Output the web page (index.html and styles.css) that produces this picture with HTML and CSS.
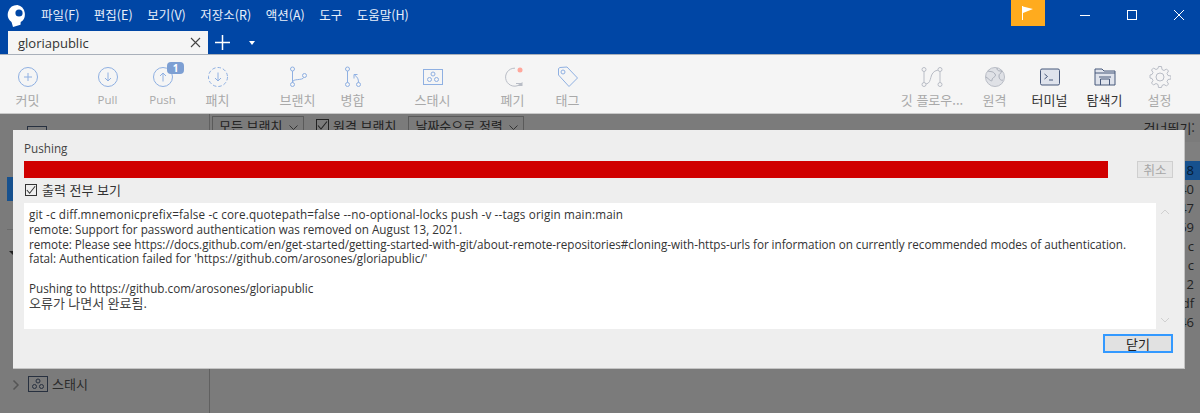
FILE: index.html
```html
<!DOCTYPE html>
<html lang="ko">
<head>
<meta charset="utf-8">
<title>gloriapublic</title>
<link rel="stylesheet" href="styles.css">
</head>
<body>
<div class="app">
  <header class="titlebar">
    <div class="menu-row">
      <svg class="logo" width="22" height="24" viewBox="0 0 22 24"><path d="M10.500 1a9.500 9.500 0 0 0-6 17l1.500 5 7.500-2.200.2-2.700A9.500 9.500 0 0 0 10.500 1z" fill="#fff"/><circle cx="12" cy="9" r="3.600" fill="#0046a5"/></svg>
      <nav class="menu">
        <span>파일(F)</span><span>편집(E)</span><span>보기(V)</span><span>저장소(R)</span><span>액션(A)</span><span>도구</span><span>도움말(H)</span>
      </nav>
      <div class="flag"><svg width="14" height="16" viewBox="0 0 14 16"><path d="M1.500 1v14" stroke="#fff" fill="none"/><path d="M2 1.500 12 4 2 8z" fill="#fff"/></svg></div>
      <div class="winbtns">
        <svg width="12" height="12" viewBox="0 0 12 12"><path d="M1 6.500h10" stroke="#fff" fill="none"/></svg>
        <svg width="12" height="12" viewBox="0 0 12 12"><rect x="1.500" y="1.500" width="9" height="9" stroke="#fff" fill="none"/></svg>
        <svg width="12" height="12" viewBox="0 0 12 12"><path d="M1 1l10 10M11 1 1 11" stroke="#fff" fill="none"/></svg>
      </div>
    </div>
    <div class="tab-row">
      <div class="tab"><span>gloriapublic</span><svg width="11" height="11" viewBox="0 0 11 11"><path d="M1 1l9 9M10 1 1 10" stroke="#444" stroke-width="1.100" fill="none"/></svg></div>
      <svg class="plus" width="15" height="15" viewBox="0 0 15 15"><path d="M7.500 0v15M0 7.500h15" stroke="#fff" stroke-width="1.500" fill="none"/></svg>
      <span class="caret"></span>
    </div>
  </header>

  <section class="toolbar">
    <div class="tool"><svg viewBox="0 0 22 22"><circle cx="11" cy="11" r="9.500" fill="none" stroke="#8fb0e2"/><path d="M11 7v8M7 11h8" stroke="#8fb0e2" fill="none"/></svg><span>커밋</span></div>
    <div class="tool gap"><svg viewBox="0 0 22 22"><circle cx="11" cy="11" r="9.500" fill="none" stroke="#8fb0e2"/><path d="M11 6.500v8.500M8 12l3 3 3-3" stroke="#8fb0e2" fill="none"/></svg><span class="latin">Pull</span></div>
    <div class="tool"><svg viewBox="0 0 22 22"><circle cx="11" cy="11" r="9.500" fill="none" stroke="#8fb0e2"/><path d="M11 15.500V7M8 10l3-3 3 3" stroke="#8fb0e2" fill="none"/></svg><span class="latin">Push</span><b class="badge">1</b></div>
    <div class="tool"><svg viewBox="0 0 22 22"><circle cx="11" cy="11" r="9.500" fill="none" stroke="#8fb0e2" stroke-dasharray="3.500 2"/><path d="M11 6.500v8.500M8 12l3 3 3-3" stroke="#8fb0e2" fill="none"/></svg><span>패치</span></div>
    <div class="tool gap"><svg viewBox="0 0 22 22"><g fill="none" stroke="#8fb0e2"><circle cx="5.500" cy="3" r="2"/><circle cx="5.500" cy="18.500" r="2"/><circle cx="17.500" cy="9.500" r="2"/><path d="M5.500 5v11.500M5.500 16.500c0-4.500 10-1.500 11.500-5.200"/></g></svg><span>브랜치</span></div>
    <div class="tool"><svg viewBox="0 0 22 22"><g fill="none" stroke="#8fb0e2"><circle cx="5.500" cy="3" r="2"/><circle cx="5.500" cy="18.500" r="2"/><circle cx="16.500" cy="18.500" r="2"/><path d="M5.500 5v11.500M16.500 16.500c0-3.500-1-5.500-4-7.500M12 12.500V8.500h3.500"/></g></svg><span>병합</span></div>
    <div class="tool gap"><svg viewBox="0 0 22 22"><g fill="none" stroke="#8fb0e2"><rect x="1.500" y="3.500" width="19" height="15"/><circle cx="11" cy="8" r="2"/><circle cx="7.500" cy="13.500" r="2"/><circle cx="14.500" cy="13.500" r="2"/></g></svg><span>스태시</span></div>
    <div class="tool gap"><svg viewBox="0 0 22 22"><path d="M13 2.200A9 9 0 1 0 19 17.500M19 17.500h-5" fill="none" stroke="#b9bdc6"/><path d="M15 20l5.500-4v4z" fill="#b9bdc6"/><circle cx="18" cy="4" r="2.500" fill="#ffa79c"/></svg><span>폐기</span></div>
    <div class="tool"><svg viewBox="0 0 22 22"><g fill="none" stroke="#8fb0e2"><path d="M1.500 2.500l1.500-1 7-.5L20.500 12 12 20.500 1.500 9z"/><circle cx="6" cy="6" r="2"/></g></svg><span>태그</span></div>
    <div class="tool flow"><svg viewBox="0 0 22 22"><g fill="none" stroke="#b9bdc6"><circle cx="3" cy="3.500" r="2"/><circle cx="3" cy="18.500" r="2"/><circle cx="19" cy="3.500" r="2"/><circle cx="19" cy="18.500" r="2"/><path d="M3 5.500v11M19 5.500v11M5 18c7-1 2-12 12-14"/></g></svg><span>깃 플로우...</span></div>
    <div class="tool"><svg viewBox="0 0 22 22"><circle cx="11" cy="11" r="9.500" fill="#dfe1e6" stroke="#b9bdc6"/><path d="M4 5c3 1 5 0 7 3s-3 3-3 6-4-2-6-3M13 2c0 3 2 3 5 3-1 3-3 2-3 5s2 5 4 4" fill="none" stroke="#a9aeb9"/></svg><span>원격</span></div>
    <div class="tool dark"><svg viewBox="0 0 22 22"><rect x="1.500" y="3" width="19" height="16" rx="1.500" fill="#dfe3ec" stroke="#47587a"/><path d="M5.500 8l3 2.500-3 2.500M10 14h4" fill="none" stroke="#47587a"/></svg><span>터미널</span></div>
    <div class="tool dark"><svg viewBox="0 0 22 22"><path d="M1 19V3h7l2 2h11v14z" fill="#dfe3ec" stroke="#47587a"/><path d="M1 7h20M6.500 19v-6h9v6M5 11h12" fill="none" stroke="#47587a"/></svg><span>탐색기</span></div>
    <div class="tool"><svg viewBox="0 0 22 22"><g fill="none" stroke="#b9bdc6"><circle cx="11" cy="11" r="4"/><path d="M9.500 1h3l.5 3 2 1 2.500-1.500 2 2L18 8l1 2 3 .5v3l-3 .5-1 2 1.500 2.500-2 2L15 19l-2 1-.5 2h-3L9 19l-2-1-2.500 1.500-2-2L4 15l-1-2-2-.5v-3L3 9l1-2-1.500-2.500 2-2L7 4l2-1z" transform="translate(0 -.5)"/></g></svg><span>설정</span></div>
  </section>

  <main class="backdrop">
    <aside class="side">
      <div class="side-top"><span class="side-box"></span></div>
      <div class="side-sel"></div>
      <div class="side-rule"></div>
      <svg class="side-arrow" width="6" height="6" viewBox="0 0 6 6"><path d="M0 0h6v6z" fill="#222"/></svg>
      <div class="side-fill"></div>
      <div class="side-stash">
        <svg class="side-chev" width="8" height="12" viewBox="0 0 8 12"><path d="M1.500 1.500 6 6l-4.500 4.500" fill="none" stroke="#555" stroke-width="1.500"/></svg>
        <svg width="20" height="16" viewBox="0 0 20 16"><g fill="none" stroke="#27303f"><rect x=".5" y=".5" width="19" height="15"/><circle cx="10" cy="5" r="2"/><circle cx="6.500" cy="10.500" r="2"/><circle cx="13.500" cy="10.500" r="2"/></g></svg>
        <span>스태시</span>
      </div>
    </aside>
    <div class="content">
      <div class="filter">
        <span class="select sel-a">모든 브랜치<svg width="9" height="5" viewBox="0 0 9 5"><path d="M.5.500l4 4 4-4" fill="none" stroke="#333"/></svg></span>
        <span class="check-bg"><svg width="13" height="13" viewBox="0 0 13 13"><path d="M2 6.500 5 10l6-7.500" fill="none" stroke="#222" stroke-width="1.100"/></svg></span><span class="lbl">원격 브랜치</span>
        <span class="select sel-b">날짜순으로 정렬<svg width="9" height="5" viewBox="0 0 9 5"><path d="M.5.500l4 4 4-4" fill="none" stroke="#333"/></svg></span>
        <span class="skip">건너뛰기:</span>
      </div>
      <div class="rows">
        <div class="row head"></div>
        <div class="row on">8</div>
        <div class="row">40</div>
        <div class="row">47</div>
        <div class="row">69</div>
        <div class="row">c</div>
        <div class="row">c</div>
        <div class="row">2</div>
        <div class="row">df</div>
        <div class="row">46</div>
      </div>
    </div>
  </main>

  <div class="modal">
    <div class="m-title">Pushing</div>
    <div class="m-progress">
      <div class="bar"></div>
      <button class="cancel">취소</button>
    </div>
    <label class="m-check"><span class="box"><svg width="12" height="12" viewBox="0 0 13 13"><path d="M2 6.500 5 10l6-7.500" fill="none" stroke="#333" stroke-width="1.100"/></svg></span>출력 전부 보기</label>
    <div class="m-log">
      <pre class="log"><span class="wide">git -c diff.mnemonicprefix=false -c core.quotepath=false --no-optional-locks push -v --tags origin main:main</span>
remote: Support for password authentication was removed on August 13, 2021.
<span class="tight">remote: Please see https://docs.github.com/en/get-started/getting-started-with-git/about-remote-repositories#cloning-with-https-urls for information on currently recommended modes of authentication.</span>
fatal: Authentication failed for 'https://github.com/arosones/gloriapublic/'

Pushing to https://github.com/arosones/gloriapublic
<span class="ko">오류가 나면서 완료됨.</span></pre>
      <div class="scroll">
        <svg width="10" height="6" viewBox="0 0 10 6"><path d="M1 5l4-4 4 4" fill="none" stroke="#d0d0d0"/></svg>
        <svg width="10" height="6" viewBox="0 0 10 6"><path d="M1 1l4 4 4-4" fill="none" stroke="#d0d0d0"/></svg>
      </div>
    </div>
    <div class="m-foot"><button class="close">닫기</button></div>
  </div>
</div>
</body>
</html>
```

FILE: styles.css
```css
* { box-sizing: border-box; }
html, body { margin: 0; padding: 0; }
body {
  width: 1200px; height: 413px; overflow: hidden;
  font-family: "Open Sans", "Noto Sans CJK KR", sans-serif;
  font-size: 12px; color: #222;
}
.app { position: relative; width: 1200px; height: 413px; display: flex; flex-direction: column; background: #7b7b7b; }

.titlebar { height: 55px; background: #0046a5; border-bottom: 1px solid #a9b0ba; display: flex; flex-direction: column; flex: none; }
.menu-row { height: 31px; display: flex; align-items: flex-start; color: #fff; }
.logo { margin: 4px 0 0 7px; flex: none; }
.menu { display: flex; gap: 14.500px; margin: 6px 0 0 12px; font-size: 12.500px; line-height: 17px; color: #e8effa; font-family: "Noto Sans CJK KR", sans-serif; }
.flag { width: 34px; height: 26px; margin-left: auto; background: #ffab1e; display: flex; align-items: center; justify-content: center; }
.winbtns { width: 155px; display: flex; justify-content: space-between; padding: 9px 15px 0 34px; }
.tab-row { display: flex; align-items: center; height: 23px; }
.tab { width: 200px; height: 23px; margin-left: 8px; background: #f5f5f5; color: #333; display: flex; align-items: center; justify-content: space-between; padding: 0 7px 0 10px; font-size: 13px; }
.plus { margin-left: 7px; }
.caret { margin-left: 19px; border: 3.500px solid transparent; border-top: 4px solid #fff; border-bottom: 0; }

.toolbar { height: 59px; background: #f5f5f5; border-bottom: 1px solid #c9c9c9; display: flex; flex: none; padding-right: 13px; }
.tool { position: relative; width: 55px; display: flex; flex-direction: column; align-items: center; padding-top: 11px; color: #a9a9a9; font-family: "Noto Sans CJK KR", sans-serif; font-size: 13px; line-height: 16px; white-space: nowrap; }
.tool svg { width: 22px; height: 22px; margin-bottom: 4px; }
.tool .latin { font: 11.500px/16px "Open Sans", sans-serif; }
.tool.gap { margin-left: 25px; }
.tool.flow { width: 70px; margin-left: auto; }
.tool.dark { color: #333; }
.badge { position: absolute; left: 32px; top: 7px; width: 17px; height: 12px; border-radius: 4px; background: #7d9fd3; color: #fff; font: bold 10px/12px "Open Sans", sans-serif; text-align: center; }

.backdrop { flex: 1; display: flex; min-height: 0; }
.side { width: 210px; border-right: 1px solid #606060; display: flex; flex-direction: column; flex: none; }
.side-top { height: 63px; padding: 12px 0 0 27px; flex: none; }
.side-box { display: block; width: 20px; height: 20px; border: 1px solid #27303f; }
.side-sel { width: 6px; height: 24px; margin-left: 7px; background: #17518e; flex: none; }
.side-rule { width: 6px; height: 1px; margin: 28px 0 0 7px; background: #6a6a6a; flex: none; }
.side-arrow { margin: 21px 0 0 9px; flex: none; }
.side-fill { flex: 1; }
.side-stash { height: 37px; display: flex; align-items: flex-start; gap: 4px; padding: 0 0 0 12px; color: #2b2b2b; font-family: "Noto Sans CJK KR", sans-serif; font-size: 13px; line-height: 15px; flex: none; }
.side-stash > svg:nth-child(2) { margin-left: -3px; }
.side-chev { margin: 3px 7px 0 0; }

.content { flex: 1; display: flex; flex-direction: column; min-width: 0; }
.filter { height: 28px; display: flex; align-items: flex-start; padding: 2px 0 0 2px; font-family: "Noto Sans CJK KR", sans-serif; font-size: 13px; color: #222; line-height: 16px; flex: none; }
.select { height: 20px; border: 1px solid #5a5a5a; padding: 1px 5px 0 6px; display: flex; justify-content: space-between; align-items: flex-start; }
.select svg { margin-top: 7px; }
.sel-a { width: 92px; }
.check-bg { width: 13px; height: 13px; border: 1px solid #222; margin: 3px 0 0 12px; line-height: 0; }
.check-bg svg { display: block; margin: -1px; }
.lbl { margin: 2px 0 0 4px; }
.sel-b { width: 116px; margin-left: 12px; }
.skip { margin: 4px 5px 0 auto; }
.rows { flex: 1; overflow: hidden; }
.row { height: 19px; padding-right: 6px; text-align: right; line-height: 19px; color: #222; font-size: 13px; }
.row.head { height: 19px; background: #7f7f7f; }
.row.on { background: #17518e; color: #061a33; }

.modal { position: absolute; left: 13px; top: 130px; width: 1172px; height: 239px; background: #eeeeee; border-right: 1px solid #c4c4c4; border-bottom: 1px solid #c4c4c4; padding: 10px 11px 0; display: flex; flex-direction: column; }
.m-title { height: 21px; line-height: 17px; color: #444; font-size: 11.700px; flex: none; }
.m-progress { display: flex; gap: 29px; height: 17px; flex: none; }
.bar { width: 1085px; background: #d00000; }
.cancel { width: 36px; height: 17px; padding: 0; background: #e6e6e6; border: 1px solid #cfcfcf; color: #a6a6a6; font: 12.500px/15px "Noto Sans CJK KR", sans-serif; }
.m-check { height: 23px; margin-bottom: 2px; display: flex; align-items: center; gap: 5px; color: #333; font: 13px/16px "Noto Sans CJK KR", sans-serif; flex: none; }
.box { width: 12px; height: 12px; border: 1px solid #333; margin-left: 1px; display: block; line-height: 0; }
.box svg { display: block; margin: -1px; }
.m-log { display: flex; height: 126px; flex: none; }
.log { width: 1133px; height: 126px; margin: 0; background: #fff; padding: 4px 5px; white-space: pre; overflow: hidden; font-family: "Open Sans", "Noto Sans CJK KR", sans-serif; font-size: 11.700px; line-height: 14.800px; color: #333; }
.wide { letter-spacing: .14px; }
.tight { letter-spacing: -.035px; }
.ko { font-size: 13px; color: #444; }
.scroll { width: 17px; display: flex; flex-direction: column; justify-content: space-between; align-items: center; padding: 6px 0; }
.scroll svg { display: block; }
.m-foot { display: flex; justify-content: flex-end; padding: 5px 0 0; flex: none; }
.close { width: 70px; height: 19px; padding: 0; background: #e1e1e1; border: 2px solid #3399ff; color: #222; font: 13px/14px "Noto Sans CJK KR", sans-serif; }
```
